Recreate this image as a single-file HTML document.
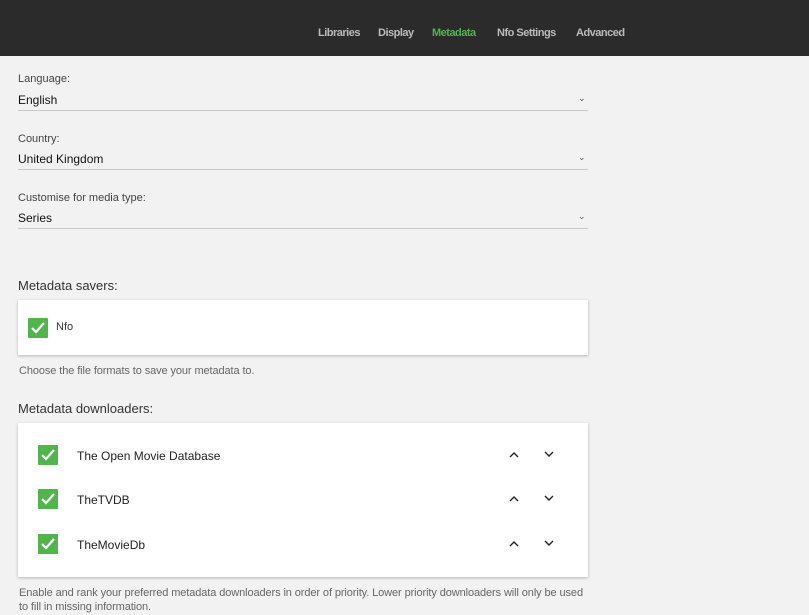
<!DOCTYPE html>
<html><head><style>
body{margin:0;width:809px;height:615px;background:#f2f2f2;font-family:"Liberation Sans",sans-serif;position:relative;overflow:hidden;color:#222}
.hdr{position:absolute;left:0;top:0;width:809px;height:56px;background:#2b2b2b}
.nav{position:absolute;top:27px;font-size:11px;font-weight:bold;color:#bbb;letter-spacing:-0.5px}
.a{position:absolute;font-size:11px;color:#333}
.lbl{position:absolute;left:18px;font-size:11px;color:#444}
.val{position:absolute;left:18px;font-size:12px;color:#111}
.line{position:absolute;left:18px;width:570px;height:1px;background:#c8c8c8}
.chev{position:absolute;left:578px;font-size:9px;color:#555}
.card{position:absolute;left:18px;width:570px;background:#fff;box-shadow:0 1px 3px rgba(0,0,0,.25)}
.cb{position:absolute;width:20px;height:20px;background:#52b54b;border-radius:1px}
.cb svg{position:absolute;left:3px;top:4px}
.h{position:absolute;left:18px;font-size:13px;color:#333}
.s{position:absolute;left:19px;font-size:11px;color:#666;letter-spacing:-0.1px}
.t{position:absolute;left:77px;font-size:12px;color:#222}
.ar{position:absolute}
</style></head><body>
<div class="hdr">
<span class="nav" style="left:318px">Libraries</span>
<span class="nav" style="left:378px">Display</span>
<span class="nav" style="left:432px;color:#52b54b">Metadata</span>
<span class="nav" style="left:497px">Nfo Settings</span>
<span class="nav" style="left:576px">Advanced</span>
</div>
<div class="lbl" style="top:73px">Language:</div><div class="val" style="top:93px">English</div><div class="chev" style="top:93px">⌄</div><div class="line" style="top:110px"></div>
<div class="lbl" style="top:133px">Country:</div><div class="val" style="top:152px">United Kingdom</div><div class="chev" style="top:152px">⌄</div><div class="line" style="top:169px"></div>
<div class="lbl" style="top:192px">Customise for media type:</div><div class="val" style="top:211px">Series</div><div class="chev" style="top:211px">⌄</div><div class="line" style="top:228px"></div>
<div class="h" style="top:278px">Metadata savers:</div>
<div class="card" style="top:300px;height:55px">
<div class="cb" style="left:10px;top:18px"><svg width="14" height="12"><path d="M1 6l4 4 8-9" stroke="#fff" stroke-width="2.2" fill="none"/></svg></div>
<div class="a" style="left:38px;top:21px;font-size:11px">Nfo</div>
</div>
<div class="s" style="top:365px">Choose the file formats to save your metadata to.</div>
<div class="h" style="top:401px">Metadata downloaders:</div>
<div class="card" style="top:423px;height:154px"></div>
<div class="cb" style="left:38px;top:445px"><svg width="14" height="12"><path d="M1 6l4 4 8-9" stroke="#fff" stroke-width="2.2" fill="none"/></svg></div>
<div class="t" style="top:449px">The Open Movie Database</div>
<div class="cb" style="left:38px;top:489px"><svg width="14" height="12"><path d="M1 6l4 4 8-9" stroke="#fff" stroke-width="2.2" fill="none"/></svg></div>
<div class="t" style="top:493px">TheTVDB</div>
<div class="cb" style="left:38px;top:534px"><svg width="14" height="12"><path d="M1 6l4 4 8-9" stroke="#fff" stroke-width="2.2" fill="none"/></svg></div>
<div class="t" style="top:538px">TheMovieDb</div>
<svg class="ar" style="left:509px;top:449px" width="46" height="100">
<g stroke="#222" stroke-width="1.4" fill="none">
<path d="M1 8l4-4 4 4"/><path d="M36 3l4 4 4-4"/>
<path d="M1 52l4-4 4 4"/><path d="M36 47l4 4 4-4"/>
<path d="M1 97l4-4 4 4"/><path d="M36 92l4 4 4-4"/>
</g></svg>
<div class="s" style="top:586px;line-height:14px">Enable and rank your preferred metadata downloaders in order of priority. Lower priority downloaders will only be used<br>to fill in missing information.</div>
</body></html>
